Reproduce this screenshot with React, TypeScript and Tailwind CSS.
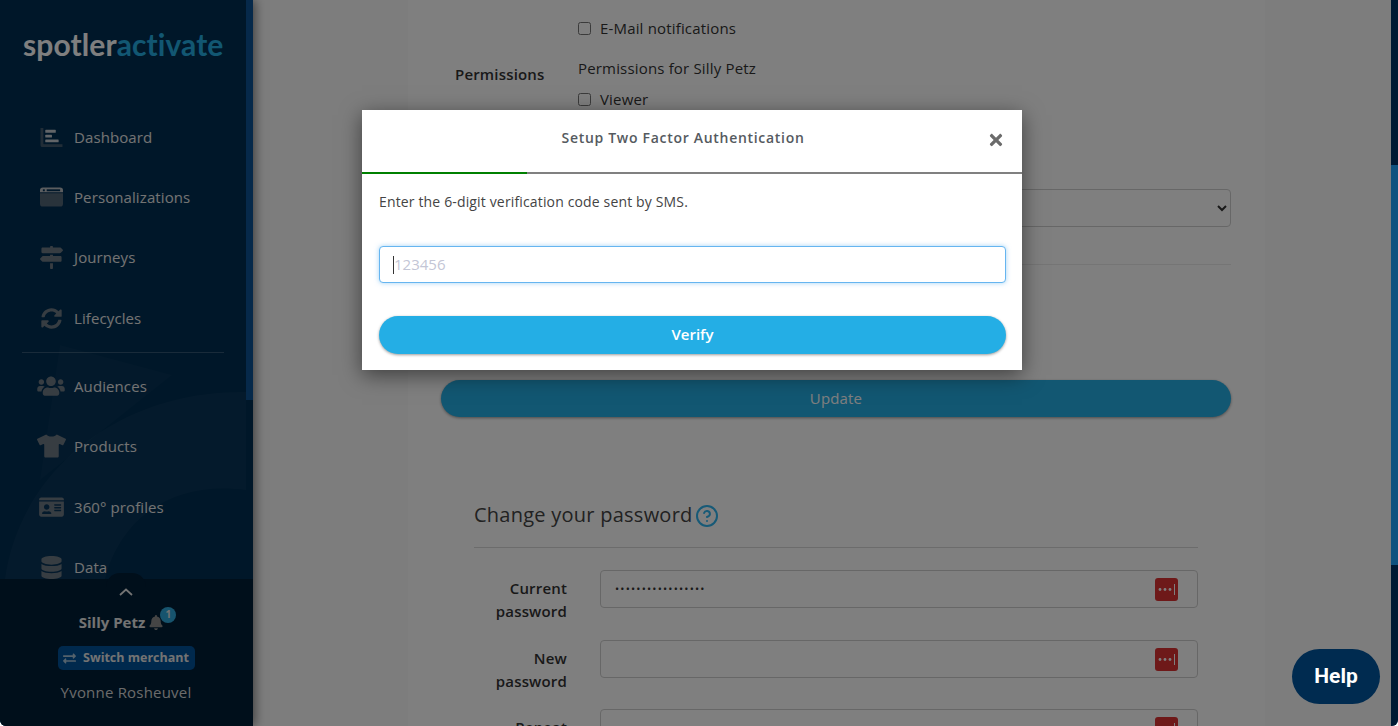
import type { ComponentType } from "react";
import { CircleHelp } from "lucide-react";
import {
  FaBell,
  FaDatabase,
  FaExchangeAlt,
  FaIdCard,
  FaMapSigns,
  FaSyncAlt,
  FaTimes,
  FaTshirt,
  FaUsers,
} from "react-icons/fa";

type Icon = ComponentType<{ className?: string }>;

function DashboardIcon({ className }: { className?: string }) {
  return (
    <svg viewBox="0 0 24 22" className={className}>
      <path d="M1 1h3v16.5c0 .3.2.5.5.5H24v3H3a2 2 0 0 1-2-2z" fill="currentColor" fillOpacity="0.6" />
      <rect x="6" y="3" width="11" height="3" rx="0.6" fill="#e6e6e6" fillOpacity="0.85" />
      <rect x="6" y="8" width="7" height="3" rx="0.6" fill="#e6e6e6" fillOpacity="0.85" />
      <rect x="6" y="13" width="14" height="3" rx="0.6" fill="#e6e6e6" fillOpacity="0.85" />
    </svg>
  );
}

function WindowIcon({ className }: { className?: string }) {
  return (
    <svg viewBox="0 0 24 20" className={className}>
      <path d="M0 6h24v11a3 3 0 0 1-3 3H3a3 3 0 0 1-3-3z" fill="currentColor" fillOpacity="0.75" />
      <path d="M3 0h18a3 3 0 0 1 3 3v2H0V3a3 3 0 0 1 3-3z" fill="#b8bcc0" />
      <rect x="3" y="2" width="2" height="2" fill="#002e52" />
      <rect x="7" y="2" width="14" height="2" fill="#002e52" />
    </svg>
  );
}

const topItems: [Icon, string, string][] = [
  [DashboardIcon, "Dashboard", "h-[21px] w-[24px]"],
  [WindowIcon, "Personalizations", "h-[20px] w-[23px]"],
  [FaMapSigns, "Journeys", "h-[23px] w-[23px]"],
  [FaSyncAlt, "Lifecycles", "h-[21px] w-[21px]"],
];

const bottomItems: [Icon, string, string][] = [
  [FaUsers, "Audiences", "h-[22px] w-[28px]"],
  [FaTshirt, "Products", "h-[24px] w-[29px]"],
  [FaIdCard, "360° profiles", "h-[22px] w-[25px]"],
  [FaDatabase, "Data", "h-[23px] w-[21px]"],
];

function NavItem({ icon: Glyph, label, size, className }: { icon: Icon; label: string; size: string; className?: string }) {
  return (
    <div className={`flex h-[60px] items-center ${className ?? ""}`}>
      <div className="flex w-[74px] justify-center pl-[32px] pr-[4px]">
        <Glyph className={`shrink-0 text-[#6f7a84] ${size}`} />
      </div>
      <span className="text-[15px] tracking-[0.1px] text-[#e6e6e6]">{label}</span>
    </div>
  );
}

function Sidebar() {
  return (
    <aside className="relative z-10 flex h-full w-[253px] shrink-0 flex-col overflow-hidden bg-[#002e52] shadow-[2px_0_10px_rgba(0,0,0,0.5)]">
      {/* background swoosh */}
      <svg className="absolute left-0 top-0 h-[726px] w-[246px]" viewBox="0 0 246 726">
        <path d="M60 345L172 375L40 480Z" fill="#ffffff" fillOpacity="0.025" />
        <path d="M5 579C20 470 120 390 246 392V490C170 480 120 520 105 579Z" fill="#ffffff" fillOpacity="0.035" />
      </svg>
      <div className="absolute right-0 top-0 h-[400px] w-[7px] bg-[#0c5294]" />
      <div className="relative min-h-0 flex-1 overflow-hidden">
        <div className="flex h-[107px] items-start pl-[23px] pt-[24px] font-['Lato',sans-serif] text-[30px] font-bold leading-[40px] tracking-[0.1px]">
          <span className="text-white">spotler</span>
          <span className="text-[#24aee5]">activate</span>
        </div>
        {topItems.map(([icon, label, size], i) => (
          <NavItem key={label} icon={icon} label={label} size={size} className={i === 3 ? "mt-px" : ""} />
        ))}
        <div className="ml-[22px] mt-[4px] h-px w-[202px] bg-white/20" />
        <div className="mt-[3px]">
          {bottomItems.map(([icon, label, size], i) => (
            <NavItem key={label} icon={icon} label={label} size={size} className={i === 2 ? "mt-px" : ""} />
          ))}
        </div>
      </div>
      <div className="relative flex h-[147px] shrink-0 flex-col items-center bg-[#001e36] pr-[1px]">
        <div className="absolute left-[106px] top-[-6px] h-[14px] w-[40px] rounded-t-full bg-[#001e36]" />
        <svg viewBox="0 0 14 8" className="relative mt-[9px] h-[8px] w-[14px]" fill="none" stroke="#e6e6e6" strokeWidth="1.8">
          <path d="M1 7l6-5.5L13 7" />
        </svg>
        <div className="mt-[14px] flex h-[24px] items-center pr-[10px]">
          <span className="text-[15px] font-bold text-[#e6e6e6]">Silly Petz</span>
          <div className="relative ml-[4px]">
            <FaBell className="h-[15px] w-[14px] text-[#8a8a8a]" />
            <span className="absolute left-[11px] top-[-8px] flex h-[16px] w-[16px] items-center justify-center rounded-full bg-[#2fa9dc] text-[10px] font-bold text-[#e6e6e6]">
              1
            </span>
          </div>
        </div>
        <div className="mt-[12px] flex h-[24px] w-[137px] items-center justify-center gap-[7px] rounded-[5px] bg-[#00529b] text-[12.5px] font-bold text-[#e6e6e6]">
          <FaExchangeAlt className="h-[13px] w-[13px] text-[#a9c4d8]" />
          <span>Switch merchant</span>
        </div>
        <div className="mt-[11px] text-[15px] leading-[22px] tracking-[0.2px] text-[#d6d6d6]">Yvonne Rosheuvel</div>
      </div>
    </aside>
  );
}

function KeyBadge() {
  return (
    <svg viewBox="0 0 23 23" className="h-[23px] w-[23px] shrink-0">
      <rect width="23" height="23" rx="3" fill="#dc3232" />
      <circle cx="5" cy="11.5" r="1.4" fill="#fff" />
      <circle cx="10" cy="11.5" r="1.4" fill="#fff" />
      <circle cx="15" cy="11.5" r="1.4" fill="#fff" />
      <rect x="19" y="6" width="1" height="11" fill="#fff" />
    </svg>
  );
}

function PasswordRow({ first, second, value, className }: { first: string; second: string; value?: string; className: string }) {
  return (
    <div className={`flex gap-[33px] ${className}`}>
      <label className="w-[93px] shrink-0 pt-[7px] text-right font-semibold leading-[23px] text-[#333]">
        {first}
        <br />
        {second}
      </label>
      <div className="flex h-[38px] flex-1 items-center justify-between rounded-[4px] border border-[#cfcfcf] bg-white pl-[14px] pr-[19px]">
        <input
          type="password"
          readOnly
          value={value ?? ""}
          className="min-w-0 flex-1 bg-transparent text-[11px] tracking-[1.2px] text-[#333] outline-none"
        />
        <KeyBadge />
      </div>
    </div>
  );
}

function ProfileForm() {
  return (
    <main className="flex h-full min-w-0 flex-1 justify-end overflow-hidden bg-[#fafafa] pr-[126px] text-[15px] tracking-[0.17px] text-[#333]">
      <div className="h-full w-[857px] bg-white pl-[33px] pr-[34px] pt-[18px]">
        <label className="ml-[137px] flex h-[20px] items-center gap-[9px]">
          <input type="checkbox" className="h-[13px] w-[13px]" />
          <span>E-Mail notifications</span>
        </label>
        <div className="mt-[20px] flex">
          <div className="ml-[14px] w-[123px] pt-[6px] font-semibold leading-[20px]">Permissions</div>
          <div className="flex-1">
            <div className="h-[20px] leading-[20px]">Permissions for Silly Petz</div>
            <label className="mt-[11px] flex h-[20px] items-center gap-[9px]">
              <input type="checkbox" className="h-[13px] w-[13px]" />
              <span>Viewer</span>
            </label>
          </div>
        </div>
        <select className="ml-[137px] mt-[80px] block h-[38px] w-[653px] rounded-[4px] border border-[#cfcfcf] bg-white px-2" />
        <div className="mt-[37px] h-px bg-[#eaeaea]" />
        <button className="mt-[115px] block h-[37px] w-full rounded-full bg-[#24aee5] text-[15px] font-medium text-white shadow-[0_1px_3px_rgba(0,0,0,0.4)]">
          Update
        </button>
        <div className="mx-[33px]">
          <h2 className="mt-[84px] flex h-[28px] items-center gap-[2px] text-[20px] font-medium leading-[28px] tracking-[0.25px] text-[#444]">
            Change your password
            <CircleHelp className="mt-[2px] h-[24px] w-[24px] text-[#2fb4ee]" strokeWidth={2} />
          </h2>
          <div className="mt-[18px] h-px bg-[#d8d8d8]" />
          <PasswordRow first="Current" second="password" value="aaaaaaaaaaaaaaaaa" className="mt-[22px]" />
          <PasswordRow first="New" second="password" className="mt-[17px]" />
          <PasswordRow first="Repeat" second="password" className="mt-[16px]" />
        </div>
      </div>
    </main>
  );
}

function TwoFactorModal() {
  return (
    <div className="absolute left-[362px] top-[110px] z-30 h-[260px] w-[660px] bg-white shadow-[0_5px_20px_rgba(0,0,0,0.5)]">
      <div className="relative flex h-[62px] items-center justify-center pb-[7px] pr-[18px] text-[14px] font-semibold tracking-[0.7px] text-[#555a60]">
        Setup Two Factor Authentication
        <FaTimes className="absolute left-[625px] top-[21px] h-[18px] w-[18px] text-[#6b6b6b]" />
      </div>
      <div className="h-[2px] bg-[#808080]">
        <div className="h-full w-[165px] bg-[#008000]" />
      </div>
      <div className="pl-[17px] pr-[16px]">
        <p className="mt-[18px] h-[20px] text-[14px] leading-[20px] tracking-[0.15px] text-[#444]">
          Enter the 6-digit verification code sent by SMS.
        </p>
        <div className="relative mt-[34px]">
          <input
            placeholder="123456"
            readOnly
            className="block h-[37px] w-full rounded-[4px] border border-[#66b5f0] bg-white pb-[1px] pl-[14px] text-[15px] caret-transparent shadow-[0_0_5px_rgba(102,181,240,0.6)] outline-none placeholder:text-[#c3c6d6]"
          />
          <div className="absolute left-[14px] top-[10px] h-[18px] w-px bg-[#333]" />
        </div>
        <button className="mt-[33px] block h-[38px] w-full rounded-full bg-[#24aee5] pb-[2px] text-[15px] font-semibold text-white shadow-[0_1px_3px_rgba(0,0,0,0.4)]">
          Verify
        </button>
      </div>
    </div>
  );
}

export default function App() {
  return (
    <div className="h-[726px] w-full overflow-hidden bg-white font-['Open_Sans',sans-serif]">
      <div className="relative flex h-full overflow-hidden rounded-b-[6px]">
        <Sidebar />
        <ProfileForm />
        <div className="flex h-full w-[7px] shrink-0 flex-col bg-[#003366]">
          <div className="mt-[165px] h-[400px] bg-[#21a4ff]" />
        </div>
        <div className="absolute inset-0 z-20 bg-black/50" />
        <TwoFactorModal />
        <button className="absolute bottom-[22px] right-[18px] z-30 flex h-[55px] w-[88px] items-center justify-center rounded-[28px] bg-[#002b50] font-['Roboto',sans-serif] text-[21px] font-bold text-white">
          Help
        </button>
      </div>
    </div>
  );
}
